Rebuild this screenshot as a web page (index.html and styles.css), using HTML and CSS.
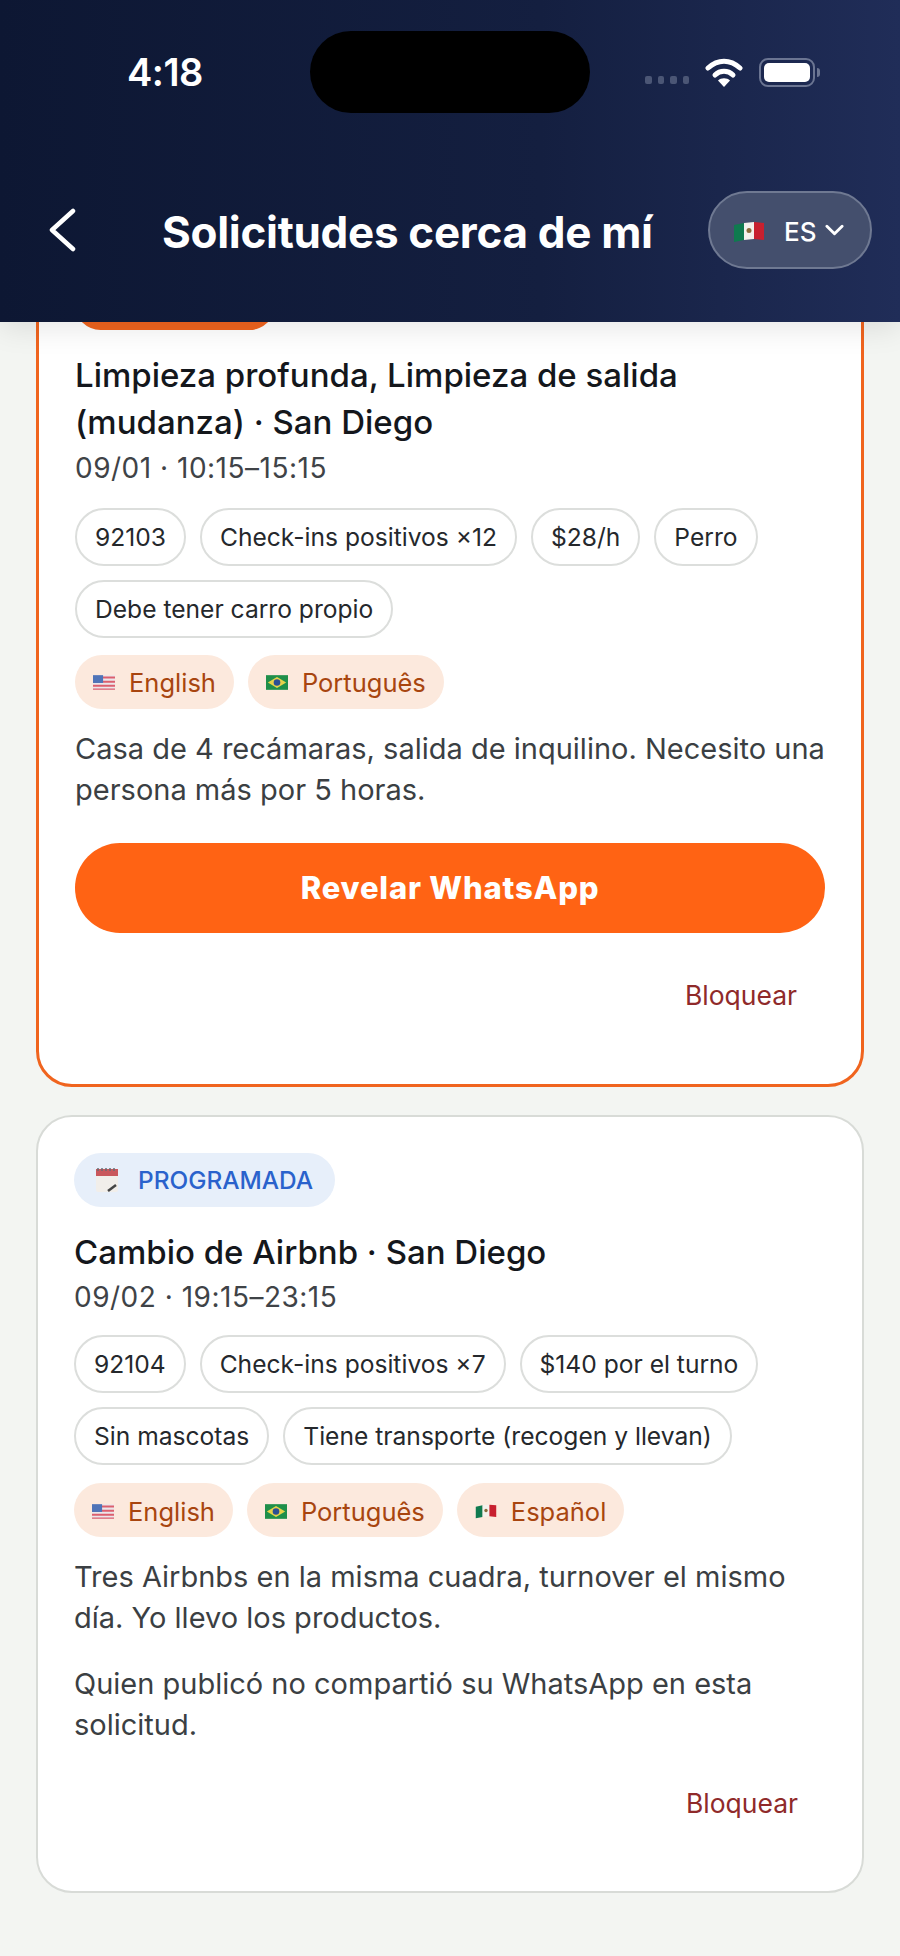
FILE: index.html
```html
<!DOCTYPE html>
<html lang="es">
<head>
    <meta charset="UTF-8">
    <title>Solicitudes cerca de mí</title>
    <link rel="stylesheet" href="styles.css">
</head>
<body>
    <svg class="flag-defs" width="0" height="0" aria-hidden="true">
        <symbol id="flag-us" viewBox="0 0 24 16">
            <rect width="24" height="16" fill="#ece6ea"/>
            <path d="M0 1.500h24v2.200H0zM0 6h24v2.200H0zM0 10.500h24v2.200H0zM0 14.500h24V16H0z" fill="#dc5f6e"/>
            <rect width="11" height="8.500" fill="#4f74b8"/>
        </symbol>
        <symbol id="flag-br" viewBox="0 0 24 16">
            <rect width="24" height="16" fill="#1f8f4a"/>
            <path d="M12 2 22 8 12 14 2 8z" fill="#e6d24a"/>
            <circle cx="12" cy="8" r="3.600" fill="#2b4f94"/>
        </symbol>
        <symbol id="flag-mx" viewBox="0 0 30 22">
            <path d="M0 4 10 2v17L0 21z" fill="#0f7a4f"/>
            <path d="M10 2 20 1v17l-10 1z" fill="#f4f1ec"/>
            <path d="M20 1l10 1v17l-10-1z" fill="#c8202f"/>
            <circle cx="15" cy="9.500" r="2.500" fill="#8a6b3a"/>
        </symbol>
    </svg>

    <header class="top-bar">
        <div class="status-bar">
            <span class="clock">4:18</span>
            <div class="island"></div>
            <div class="status-icons">
                <div class="signal"><i></i><i></i><i></i><i></i></div>
                <svg class="wifi" viewBox="0 0 38 29" width="38" height="29">
                    <path d="M3 10C13 1 25 1 35 10" fill="none" stroke="#fff" stroke-width="5" stroke-linecap="round"/>
                    <path d="M10 17C15 12 23 12 28 17" fill="none" stroke="#fff" stroke-width="5" stroke-linecap="round"/>
                    <path d="M19 29 13 22.500C16 19.500 22 19.500 25 22.500z" fill="#fff"/>
                </svg>
                <div class="battery"><div class="battery-fill"></div></div>
                <div class="battery-tip"></div>
            </div>
        </div>
        <div class="nav-row">
            <svg class="back" viewBox="0 0 30 44" width="30" height="44">
                <path d="M25 3 4 22l21 19" fill="none" stroke="#fff" stroke-width="4.500" stroke-linecap="round" stroke-linejoin="round"/>
            </svg>
            <h1 class="page-title">Solicitudes cerca de mí</h1>
            <div class="lang-switch">
                <svg class="flag-big"><use href="#flag-mx"/></svg>
                <span>ES</span>
                <svg class="chevron" viewBox="0 0 20 12" width="19" height="12">
                    <path d="M2 2l8 8 8-8" fill="none" stroke="#fff" stroke-width="3" stroke-linecap="round" stroke-linejoin="round"/>
                </svg>
            </div>
        </div>
    </header>

    <main class="list">
        <article class="card card-urgent">
            <div class="badge badge-urgent"></div>
            <h2 class="card-title">Limpieza profunda, Limpieza de salida (mudanza) · San Diego</h2>
            <p class="card-when">09/01 · 10:15–15:15</p>
            <div class="chips">
                <span class="chip">92103</span>
                <span class="chip">Check-ins positivos ×12</span>
                <span class="chip">$28/h</span>
                <span class="chip">Perro</span>
                <span class="chip">Debe tener carro propio</span>
            </div>
            <div class="langs">
                <span class="lang"><svg class="flag"><use href="#flag-us"/></svg>English</span>
                <span class="lang"><svg class="flag"><use href="#flag-br"/></svg>Português</span>
            </div>
            <p class="card-text">Casa de 4 recámaras, salida de inquilino. Necesito una persona más por 5 horas.</p>
            <button class="reveal-btn" type="button">Revelar WhatsApp</button>
            <div class="card-foot"><a class="block-link">Bloquear</a></div>
        </article>

        <article class="card card-plain">
            <div class="badge badge-scheduled">
                <svg class="calendar" viewBox="0 0 24 26" width="24" height="26">
                    <rect x="1" y="2" width="22" height="23" rx="2" fill="#f1eeea"/>
                    <path d="M1 2h22v7H1z" fill="#c9575c"/>
                    <path d="M3 1v3M7 1v3M11 1v3M15 1v3M19 1v3" stroke="#6b6b70" stroke-width="1.500"/>
                    <path d="M13 24l8-6" stroke="#444" stroke-width="2.500"/>
                </svg>
                PROGRAMADA
            </div>
            <h2 class="card-title">Cambio de Airbnb · San Diego</h2>
            <p class="card-when">09/02 · 19:15–23:15</p>
            <div class="chips">
                <span class="chip">92104</span>
                <span class="chip">Check-ins positivos ×7</span>
                <span class="chip">$140 por el turno</span>
                <span class="chip">Sin mascotas</span>
                <span class="chip">Tiene transporte (recogen y llevan)</span>
            </div>
            <div class="langs">
                <span class="lang"><svg class="flag"><use href="#flag-us"/></svg>English</span>
                <span class="lang"><svg class="flag"><use href="#flag-br"/></svg>Português</span>
                <span class="lang"><svg class="flag"><use href="#flag-mx"/></svg>Español</span>
            </div>
            <p class="card-text">Tres Airbnbs en la misma cuadra, turnover el mismo día. Yo llevo los productos.</p>
            <p class="card-text card-note">Quien publicó no compartió su WhatsApp en esta solicitud.</p>
            <div class="card-foot"><a class="block-link">Bloquear</a></div>
        </article>
    </main>
</body>
</html>
```

FILE: styles.css
```css
* {
    box-sizing: border-box;
}
html, body {
    margin: 0;
    height: 1956px;
    overflow: hidden;
}
body {
    background: #f3f5f2;
    font-family: "Inter", "Liberation Sans", sans-serif;
    color: #14171c;
}
.flag-defs {
    display: block;
    height: 0;
}

/* top bar */
.top-bar {
    position: relative;
    z-index: 2;
    height: 322px;
    padding: 31px 28px 0 48px;
    background: linear-gradient(90deg, #0d1733 0%, #141f40 60%, #202d58 100%);
    box-shadow: 0 6px 28px rgba(0, 0, 0, 0.1);
}
.status-bar {
    display: flex;
    align-items: center;
    height: 82px;
    padding-left: 79px;
}
.clock {
    width: 183px;
    color: #fff;
    font-size: 38px;
    font-weight: 600;
    letter-spacing: -0.5px;
}
.island {
    width: 280px;
    height: 82px;
    border-radius: 41px;
    background: #000;
}
.status-icons {
    display: flex;
    align-items: center;
    margin-left: 55px;
}
.signal {
    display: flex;
    gap: 6px;
    margin: 16px 16px 0 0;
}
.signal i {
    width: 6.500px;
    height: 8px;
    border-radius: 2px;
    background: #4b5675;
}
.battery {
    width: 56px;
    height: 29px;
    margin-left: 16px;
    padding: 3px;
    border: 2px solid #6b7592;
    border-radius: 9px;
}
.battery-fill {
    height: 100%;
    border-radius: 5px;
    background: #fff;
}
.battery-tip {
    width: 3px;
    height: 9px;
    margin-left: 2px;
    border-radius: 0 3px 3px 0;
    background: #6b7592;
}
.nav-row {
    display: flex;
    align-items: center;
    height: 78px;
    margin-top: 78px;
}
.back {
    flex: none;
}
.page-title {
    flex: 1;
    margin: 3px 0 0 84px;
    color: #fff;
    font-size: 44px;
    font-weight: 700;
    letter-spacing: -0.3px;
    white-space: nowrap;
}
.lang-switch {
    display: flex;
    align-items: center;
    width: 164px;
    height: 78px;
    padding-left: 24px;
    border: 2px solid #6f7992;
    border-radius: 39px;
    background: #444f6d;
    color: #fff;
    font-size: 26px;
    font-weight: 500;
}
.lang-switch span {
    padding-top: 2px;
}
.flag-big {
    width: 30px;
    height: 22px;
    margin: 4px 20px 0 0;
}
.chevron {
    margin-left: 9px;
}

/* cards */
.list {
    display: flex;
    flex-direction: column;
    gap: 28px;
    padding: 0 36px;
    margin-top: -83px;
}
.card {
    padding: 36px 36px 0;
    border: 2px solid #d8dbd7;
    border-radius: 36px;
    background: #fff;
}
.card-urgent {
    height: 848px;
    padding: 37px 36px 0;
    border: 3px solid #f0641e;
}
.card-plain {
    height: 778px;
}
.badge {
    display: inline-flex;
    align-items: center;
    height: 54px;
    padding: 0 22px 0 21px;
    border-radius: 27px;
    vertical-align: top;
}
.badge-urgent {
    display: flex;
    width: 200px;
    height: 51px;
    margin-bottom: 3px;
    background: #f0641e;
}
.badge-scheduled {
    gap: 19px;
    background: #e7effa;
    color: #2a62cc;
    font-size: 24.400px;
    font-weight: 500;
}
.card-title {
    margin: 22px 0 0;
    font-size: 33px;
    font-weight: 500;
    line-height: 47px;
    color: #14171c;
}
.card-when {
    margin: 1px 0 0;
    font-size: 28px;
    line-height: 40px;
    letter-spacing: 0.500px;
    color: #3f4347;
}
.card-urgent .card-when {
    margin-top: 2px;
}
.chips {
    display: flex;
    flex-wrap: wrap;
    gap: 14px;
    margin-top: 18px;
}
.card-urgent .chips {
    margin-top: 19.500px;
}
.chip {
    display: flex;
    align-items: center;
    height: 58px;
    padding: 0 18px;
    border: 2px solid #dcdedc;
    border-radius: 29px;
    font-size: 24.600px;
    color: #25282c;
}
.langs {
    display: flex;
    gap: 14px;
    margin-top: 17px;
}
.card-plain .langs {
    margin-top: 18px;
}
.lang {
    display: flex;
    align-items: center;
    gap: 14px;
    height: 54px;
    padding: 2px 18px 0;
    border-radius: 27px;
    background: #fce9dd;
    color: #a8450f;
    font-size: 25.500px;
}
.flag {
    width: 22px;
    height: 15px;
}
.card-text {
    margin: 19px 0 0;
    font-size: 29px;
    line-height: 41px;
    color: #3b3f43;
}
.card-note {
    margin-top: 25px;
}
.reveal-btn {
    display: block;
    width: 750px;
    height: 90px;
    margin-top: 33px;
    border: 0;
    border-radius: 45px;
    background: #ff6314;
    color: #fff;
    font-family: inherit;
    font-size: 31px;
    font-weight: 800;
    letter-spacing: 0.800px;
}
.card-foot {
    display: flex;
    justify-content: flex-end;
    margin-top: 42px;
    padding-right: 28px;
}
.reveal-btn + .card-foot {
    margin-top: 46.500px;
}
.block-link {
    font-size: 26.500px;
    color: #8f2a2a;
}
```
